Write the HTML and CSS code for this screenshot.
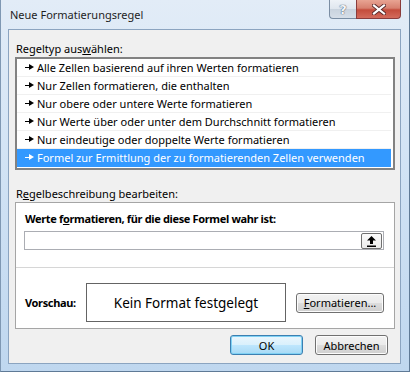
FILE: index.html
```html
<!DOCTYPE html>
<html lang="de">

<head>
    <meta charset="UTF-8">
    <meta name="viewport" content="width=device-width, initial-scale=1.0">
    <title>Neue Formatierungsregel</title>
    <link rel="stylesheet" href="styles.css">
</head>

<body>
    <div class="window">
        <div class="titlebar">
            <span class="title">Neue Formatierungsregel</span>
            <div class="caption-buttons">
                <div class="cap-btn help">?</div>
                <div class="cap-btn close">
                    <svg width="14" height="11" viewBox="0 0 14 11">
                        <path d="M2 1.5 L12 9.5 M12 1.5 L2 9.5" stroke="#5a2a2a" stroke-width="4" stroke-linecap="square" />
                        <path d="M2 1.5 L12 9.5 M12 1.5 L2 9.5" stroke="#ffffff" stroke-width="2.2" stroke-linecap="square" />
                    </svg>
                </div>
            </div>
        </div>

        <div class="client">
            <div class="group-label">Regeltyp aus<u>w</u>ählen:</div>
            <ul class="rule-list">
                <li class="rule"><span class="pointer"></span>Alle Zellen basierend auf ihren Werten formatieren</li>
                <li class="rule"><span class="pointer"></span>Nur Zellen formatieren, die enthalten</li>
                <li class="rule"><span class="pointer"></span>Nur obere oder untere Werte formatieren</li>
                <li class="rule"><span class="pointer"></span>Nur Werte über oder unter dem Durchschnitt formatieren</li>
                <li class="rule"><span class="pointer"></span>Nur eindeutige oder doppelte Werte formatieren</li>
                <li class="rule selected"><span class="pointer"></span>Formel zur Ermittlung der zu formatierenden Zellen verwenden</li>
            </ul>

            <div class="group-label">R<u>e</u>gelbeschreibung bearbeiten:</div>
            <div class="desc-box">
                <div class="formula-part">
                    <div class="bold-label">Werte f<u>o</u>rmatieren, für die diese Formel wahr ist:</div>
                    <div class="formula-input">
                        <div class="ref-btn">
                            <svg width="11" height="12" viewBox="0 0 11 12">
                                <path d="M5.5 1 L10 5.5 H7 V9 H4 V5.5 H1 Z" fill="#000" />
                                <rect x="1" y="10.5" width="9" height="1.5" fill="#000" />
                            </svg>
                        </div>
                    </div>
                </div>
                <div class="preview-part">
                    <span class="bold-label preview-label">Vorschau:</span>
                    <div class="preview">Kein Format festgelegt</div>
                    <button class="btn format-btn"><u>F</u>ormatieren...</button>
                </div>
            </div>

            <div class="dialog-buttons">
                <button class="btn default">OK</button>
                <button class="btn">Abbrechen</button>
            </div>
        </div>
    </div>
</body>

</html>
```

FILE: styles.css
```css
body {
    margin: 0;
    font-family: "Noto Sans", "Open Sans", sans-serif;
    font-size: 11px;
    color: #000;
}

.window {
    width: 410px;
    height: 372px;
    box-sizing: border-box;
    padding: 0 8px 7px 7px;
    display: flex;
    flex-direction: column;
    background: linear-gradient(#e2ecf7, #d3e4f5 40%, #bfd7ef);
    border-left: 1px solid #7f98b3;
    border-right: 1px solid #5f7a96;
    border-bottom: 1px solid #5f7a96;
}

.titlebar {
    height: 29px;
    display: flex;
    align-items: flex-start;
    justify-content: space-between;
}

.title {
    margin: 7px 0 0 2px;
    line-height: 15px;
    color: #1e1e1e;
}

.caption-buttons {
    display: flex;
}

.cap-btn {
    height: 19px;
    box-sizing: border-box;
    display: flex;
    align-items: center;
    justify-content: center;
    border: 1px solid #7a8da3;
    border-top: none;
}

.help {
    width: 27px;
    border-radius: 0 0 0 4px;
    border-right: none;
    background: linear-gradient(#eef2f7, #dfe6ee 50%, #c9d3de 51%, #d6dee8);
    font-family: "DejaVu Sans", sans-serif;
    font-size: 13px;
    font-weight: bold;
    color: #f4f6f9;
    text-shadow: 0 0 1px #44546a, 0 0 1px #44546a;
}

.close {
    width: 45px;
    border-radius: 0 0 4px 0;
    border-color: #8a3c3c;
    background: linear-gradient(#e8a493, #d7806f 45%, #c44c3c 55%, #d36b5c);
}

.client {
    flex: 1;
    background: #f0f0f0;
    border: 1px solid #8ba4c0;
    padding: 11px 5px 0 6px;
    display: flex;
    flex-direction: column;
}

.group-label {
    line-height: 15px;
    padding-left: 1px;
}

.rule-list {
    list-style: none;
    margin: 1px 0 0;
    padding: 0 2px 1px 0;
    border: 2px solid #828282;
    background: #fff;
}

.rule {
    height: 18px;
    line-height: 18px;
    box-sizing: border-box;
    padding-left: 8px;
    border-bottom: 1px solid #f0f0f0;
    display: flex;
    align-items: center;
    white-space: nowrap;
}

.rule.selected {
    background: #3399ff;
    color: #fff;
    border-bottom-color: #3399ff;
}

.pointer {
    position: relative;
    flex-shrink: 0;
    width: 9px;
    height: 7px;
    margin-right: 3px;
}

.pointer::before {
    content: "";
    position: absolute;
    left: 0;
    top: 3px;
    width: 5px;
    height: 1px;
    background: currentColor;
}

.pointer::after {
    content: "";
    position: absolute;
    left: 4px;
    top: 0;
    border-left: 5px solid currentColor;
    border-top: 3.5px solid transparent;
    border-bottom: 3.5px solid transparent;
}

.rule-list + .group-label {
    margin-top: 16px;
}

.desc-box {
    margin-top: 1px;
    background: #fff;
    border: 1px solid #a5a5a5;
}

.formula-part {
    padding: 8px 10px 17px 8px;
    border-bottom: 1px solid #d6d6d6;
}

.bold-label {
    font-weight: bold;
    line-height: 15px;
    letter-spacing: -0.35px;
}

.formula-part .bold-label {
    padding-left: 1px;
}

.formula-input {
    margin-top: 5px;
    height: 19px;
    box-sizing: border-box;
    border: 1px solid #abadb3;
    display: flex;
    justify-content: flex-end;
    align-items: center;
    padding-right: 1px;
}

.ref-btn {
    width: 21px;
    height: 16px;
    box-sizing: border-box;
    border: 1px solid #707070;
    border-radius: 2px;
    background: linear-gradient(#fbfbfb, #ececec);
    display: flex;
    align-items: center;
    justify-content: center;
}

.preview-part {
    display: flex;
    align-items: center;
    padding: 15px 0 6px 9px;
}

.preview-label {
    width: 61px;
}

.preview {
    width: 200px;
    height: 39px;
    box-sizing: border-box;
    border: 1px solid #646464;
    display: flex;
    align-items: center;
    justify-content: center;
    font-size: 13.5px;
}

.btn {
    font-family: inherit;
    font-size: 11px;
    color: #000;
    height: 20px;
    padding: 0;
    border: 1px solid #707070;
    border-radius: 3px;
    background: linear-gradient(#f2f2f2, #ebebeb 50%, #dddddd 51%, #cfcfcf);
    box-shadow: inset 0 0 0 1px #fcfcfc;
}

.format-btn {
    width: 88px;
    margin-left: 10px;
}

.dialog-buttons {
    display: flex;
    justify-content: flex-end;
    gap: 12px;
    margin-top: 6px;
    padding-right: 7px;
}

.dialog-buttons .btn {
    width: 73px;
}

.btn.default {
    border-color: #3c7fb1;
    box-shadow: inset 0 0 0 1px #7fd1f4;
    background: linear-gradient(#eaf6fd, #d9f0fc 50%, #bee6fd 51%, #a7d9f5);
}
```
